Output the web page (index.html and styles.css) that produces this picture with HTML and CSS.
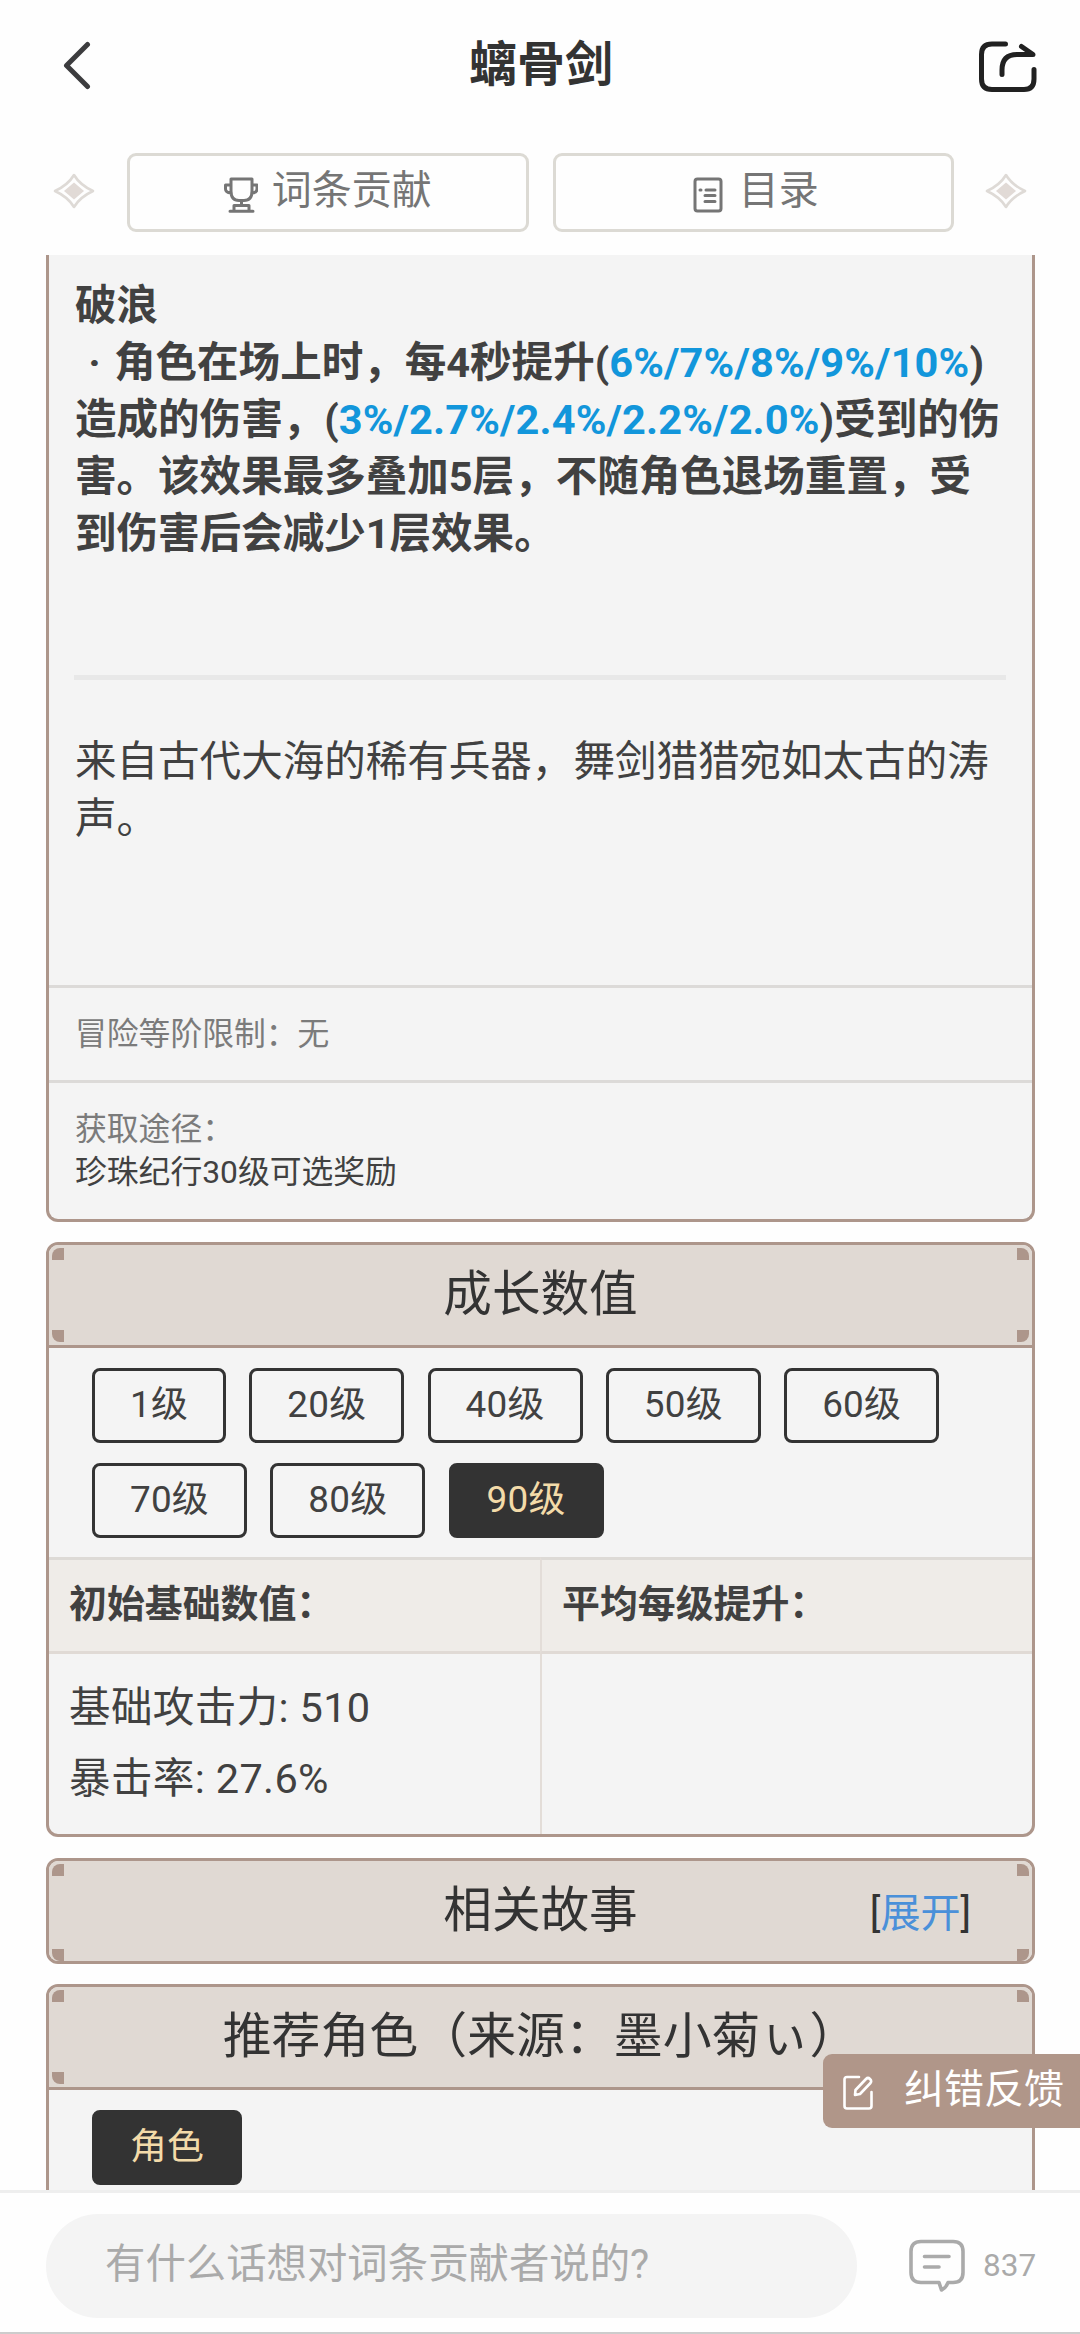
FILE: index.html
```html
<!DOCTYPE html>
<html lang="zh-CN">
<head>
<meta charset="utf-8">
<title>螭骨剑</title>
<link rel="stylesheet" href="styles.css">
</head>
<body>
<header class="topbar">
  <svg class="back" width="30" height="50" viewBox="0 0 30 50"><path d="M26.500 4.500L5.500 25.500L26.500 46.500"/></svg>
  <h1>螭骨剑</h1>
  <svg class="share" width="60" height="54" viewBox="0 0 60 54"><path d="M27.500 4H14Q3.500 4 3.500 14.500V39Q3.500 49.500 14 49.500H46Q56 49.500 56 39V29.500M24 34.500V30Q24 14.500 39 14.500H55L43.500 6.500"/></svg>
</header>
<nav class="tabs">
  <svg class="gem" width="42" height="36" viewBox="0 0 42 36"><path class="ring" d="M21 2Q27 12 40 18Q27 24 21 34Q15 24 2 18Q15 12 21 2Z"/><path class="core" d="M21 9.500L31 18L21 26.500L11 18Z"/></svg>
  <a class="tab"><svg width="34" height="36" viewBox="0 0 34 36"><path d="M7 2H28V14Q28 23.500 20 23.500H15Q7 23.500 7 14ZM7 8H1.500V12Q1.500 15.500 7 16M28 8H33V12Q33 15.500 28 16M17.500 24V28.500M10 34V28.500H25V34M6 34.300H29"/></svg><span>词条贡献</span></a>
  <a class="tab contents"><svg width="30" height="36" viewBox="0 0 30 36"><rect x="2" y="2" width="26" height="32" rx="2.500"/><path d="M7 13H8M13 13H22M12 18.500H22M12 24.500H22"/></svg><span>目录</span></a>
  <svg class="gem" width="42" height="36" viewBox="0 0 42 36"><path class="ring" d="M21 2Q27 12 40 18Q27 24 21 34Q15 24 2 18Q15 12 21 2Z"/><path class="core" d="M21 9.500L31 18L21 26.500L11 18Z"/></svg>
</nav>
<main class="content">
  <section class="card intro">
    <div class="effect">
      <p>破浪</p>
      <p><span class="dot">·</span>角色在场上时，每4秒提升(<b>6%/7%/8%/9%/10%</b>)<br>造成的伤害，(<b>3%/2.7%/2.4%/2.2%/2.0%</b>)受到的伤<br>害。该效果最多叠加5层，不随角色退场重置，受<br>到伤害后会减少1层效果。</p>
    </div>
    <hr>
    <p class="lore">来自古代大海的稀有兵器，舞剑猎猎宛如太古的涛<br>声。</p>
    <div class="row limit">冒险等阶限制：无</div>
    <div class="row source">获取途径：<p>珍珠纪行30级可选奖励</p></div>
  </section>

  <section class="card growth">
    <h2 class="head"><i></i><i></i><i></i><i></i>成长数值</h2>
    <div class="levels">
      <span class="chip">1级</span><span class="chip">20级</span><span class="chip">40级</span><span class="chip">50级</span><span class="chip">60级</span><span class="chip">70级</span><span class="chip">80级</span><span class="chip active">90级</span>
    </div>
    <div class="stats">
      <div class="th">初始基础数值：</div><div class="th">平均每级提升：</div>
      <div class="td"><p>基础攻击力: 510</p><p>暴击率: 27.6%</p></div><div class="td"></div>
    </div>
  </section>

  <section class="card story">
    <h2 class="head"><i></i><i></i><i></i><i></i>相关故事<span class="expand">[<a>展开</a>]</span></h2>
  </section>

  <section class="card roles">
    <h2 class="head"><i></i><i></i><i></i><i></i>推荐角色（来源：墨小菊ぃ）</h2>
    <div class="levels"><span class="chip active">角色</span></div>
  </section>
</main>
<a class="feedback"><svg width="30" height="36" viewBox="0 0 30 36"><path d="M16 2H4Q1.500 2 1.500 4.500V31Q1.500 33.500 4 33.500H26Q28.500 33.500 28.500 31V17M12 20L12.500 15L23 4Q25 2 27 4Q29 6 27.500 8L17 19L12 20Z"/></svg><span>纠错反馈</span></a>
<footer class="bottombar">
  <div class="input">有什么话想对词条贡献者说的?</div>
  <svg width="56" height="54" viewBox="0 0 56 54"><path d="M12 2.500H44Q54 2.500 54 12.500V33.500Q54 43.500 44 43.500H39Q37 49 32.500 51L30 43.500H12Q2 43.500 2 33.500V12.500Q2 2.500 12 2.500Z"/><path d="M15.500 17.500H40M15.500 28H30"/></svg>
  <span class="count">837</span>
</footer>
</body>
</html>
```
FILE: styles.css
```css
* { box-sizing: border-box; margin: 0; padding: 0; }
body {
  width: 1080px; height: 2334px; overflow: hidden; position: relative;
  display: flex; flex-direction: column;
  background: #fefefe; color: #414141;
  font-family: Roboto, "Noto Sans CJK SC", sans-serif;
  font-size: 41.540px;
}
svg { fill: none; stroke-linecap: round; stroke-linejoin: round; flex: none; display: block; }

.topbar { height: 153px; flex: none; display: flex; justify-content: space-between; padding: 40px 42px 0 61px; }
.topbar h1 { font-size: 48px; line-height: 49px; color: #333; font-weight: 700; padding-left: 13px; }
.back { stroke: #3c3c3e; stroke-width: 5; }
.share { stroke: #212121; stroke-width: 5; }

.tabs { height: 102px; flex: none; display: flex; align-items: flex-start; padding: 0 53px; }
.gem { margin-top: 20px; }
.gem .ring { stroke: #dedad6; stroke-width: 2.600; }
.gem .core { fill: #e1dad6; }
.tab {
  width: 402px; height: 79px; border: 3px solid #dcdad4; border-radius: 9px;
  display: flex; justify-content: center; align-items: center; gap: 14px;
  font-size: 40px; line-height: 56px; color: #757575;
  margin-left: 32px;
}
.tab + .tab { margin-left: 24px; }
.tab + .gem { margin-left: 31px; }
.tab svg { stroke: #757575; stroke-width: 3; margin-top: 4px; }
.tab span { margin-top: -3px; }
.tab.contents { gap: 16px; padding-left: 5px; }

.content { flex: none; height: 1935px; overflow: hidden; padding: 0 45px 0 46px; }
.card { background: #f4f4f4; border: 3px solid #ad968b; border-radius: 12px; margin-bottom: 20px; overflow: hidden; }
.intro { height: 967px; border-top: 0; border-radius: 0 0 12px 12px; }
.effect { height: 420px; padding: 22px 0 0 26px; font-weight: 700; line-height: 57px; white-space: nowrap; }
.effect b { color: #1296db; font-weight: 700; letter-spacing: .14px; }
.dot { display: inline-block; width: 39px; text-align: center; }
hr { border: 0; height: 5px; background: #e8e8e8; margin: 0 26px 0 25px; }
.lore { height: 305px; padding: 53px 0 0 26px; line-height: 57px; white-space: nowrap; }
.row { border-top: 3px solid #dcdad8; padding-left: 26px; font-size: 31.800px; line-height: 43px; color: #7b7b7b; }
.limit { height: 95px; padding-top: 25px; }
.source { padding-top: 25px; }
.source p { color: #414141; }

.head {
  position: relative; height: 103px; border-bottom: 3px solid #ad968b; background: #e0d9d3;
  font-size: 48.600px; font-weight: 400; line-height: 99px; text-align: center; color: #333;
}
.head i { position: absolute; width: 12px; height: 12px; background: #ad968b; }
.head i:nth-child(1) { left: 3px; top: 3px; border-top-left-radius: 8px; }
.head i:nth-child(2) { right: 3px; top: 3px; border-top-right-radius: 8px; }
.head i:nth-child(3) { left: 3px; bottom: 3px; border-bottom-left-radius: 8px; }
.head i:nth-child(4) { right: 3px; bottom: 3px; border-bottom-right-radius: 8px; }
.expand { position: absolute; right: 61px; top: 3px; font-size: 40px; }
.expand a { color: #4a90d9; }

.growth { height: 595px; margin-bottom: 21px; }
.levels { display: flex; flex-wrap: wrap; gap: 20px 23.300px; padding: 20px 43px 19px; }
.chip {
  height: 75px; border: 3px solid #333; border-radius: 8px; padding: 0 35px;
  font-size: 36.900px; line-height: 67px; letter-spacing: .2px;
}
.chip.active { background: #333; color: #f3dba9; }
.stats { display: grid; grid-template-columns: 491px 1fr; grid-template-rows: 97px 181px; }
.stats > :nth-child(even) { border-left: 2px solid #e3ddd8; }
.th { background: #efece8; border-top: 3px solid #dddad6; border-bottom: 3px solid #e0dad5; padding-left: 20px; font-size: 37.900px; font-weight: 700; line-height: 88px; }
.td { padding: 18px 0 0 20px; line-height: 71px; letter-spacing: .35px; }

.story { height: 106px; }
.story .head { border-bottom: 0; }
.roles { height: 260px; margin: 0; }
.roles .head { font-size: 48.900px; }

.feedback {
  position: absolute; left: 823px; top: 2054px; width: 257px; height: 74px;
  background: #b09689; border-radius: 9px 0 0 9px; color: #fff;
  display: flex; align-items: center; padding-left: 20px; gap: 31px;
  font-size: 40px; line-height: 70px;
}
.feedback svg { stroke: #fff; stroke-width: 2.600; margin-top: 4px; }
.feedback span { margin-top: -2px; }

.bottombar { height: 144px; flex: none; border-top: 3px solid #eee; border-bottom: 2px solid #ccc; background: #fefefe; display: flex; padding: 21px 0 0 46px; }
.input { width: 811px; height: 104px; border-radius: 52px; background: #f4f4f4; padding-left: 59px; font-size: 40.400px; line-height: 101px; color: #aaa; }
.bottombar svg { stroke: #aaa; stroke-width: 3.600; margin: 25px 18px 0 52px; }
.count { font-size: 31.500px; line-height: 104px; color: #aaa; }
```
